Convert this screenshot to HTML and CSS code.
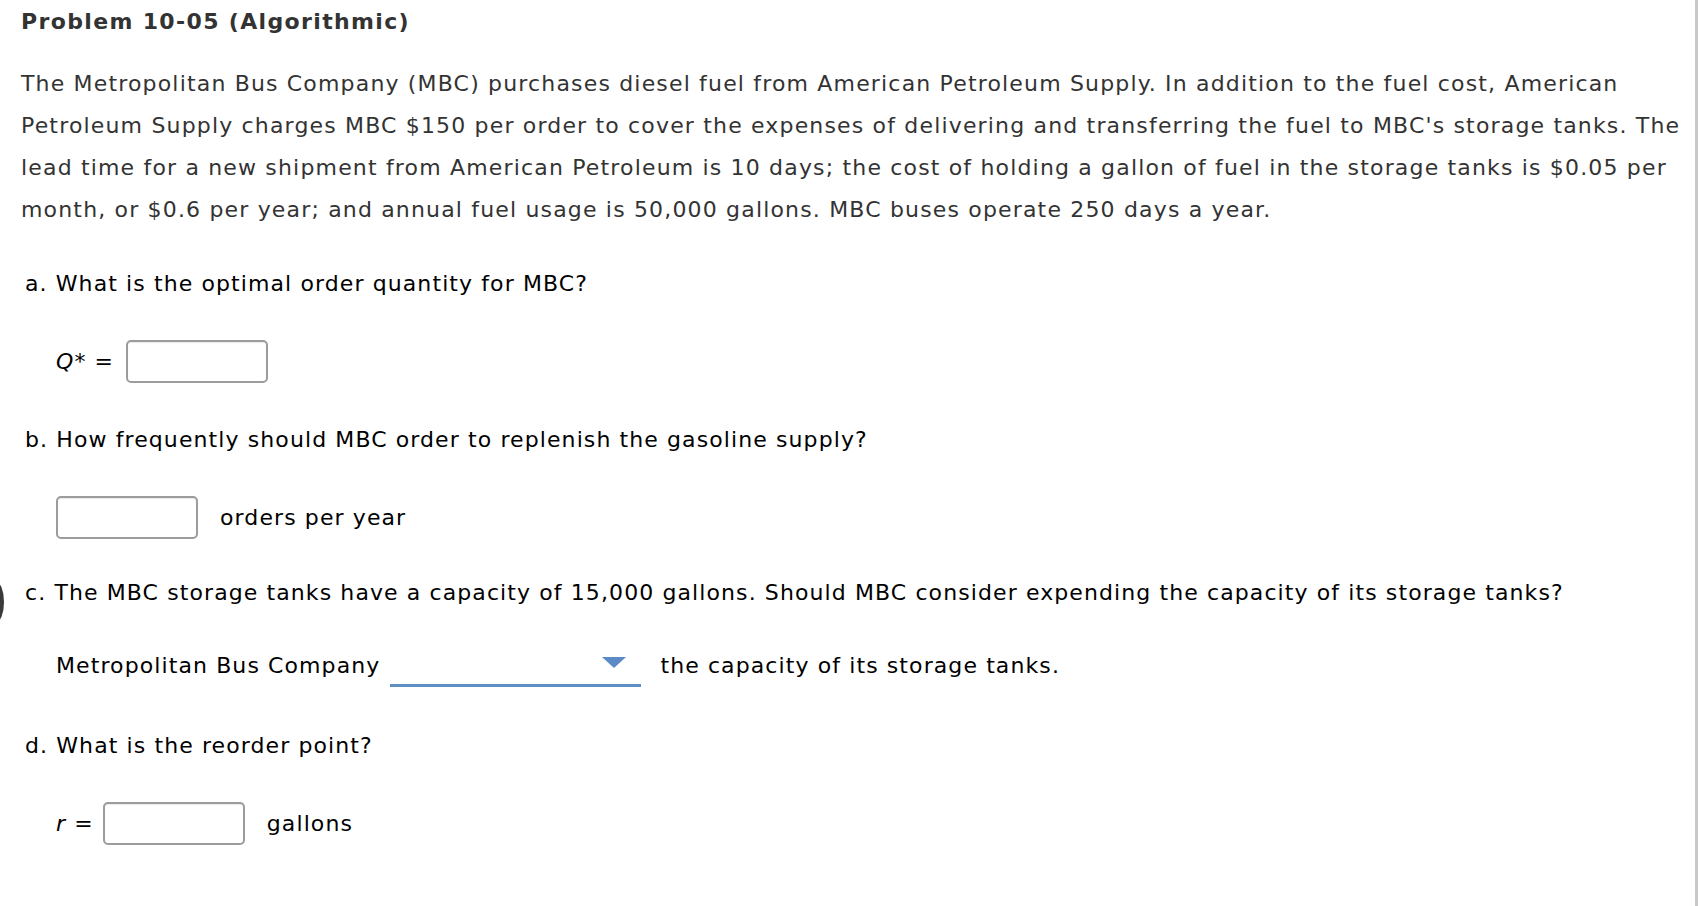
FILE: index.html
```html
<!DOCTYPE html>
<html>
<head>
<meta charset="utf-8">
<link rel="stylesheet" href="styles.css">
</head>
<body>
<div class="page">
  <h1 class="title">Problem 10-05 (Algorithmic)</h1>
  <p class="intro">The Metropolitan Bus Company (MBC) purchases diesel fuel from American Petroleum Supply. In addition to the fuel cost, American Petroleum Supply charges MBC $150 per order to cover the expenses of delivering and transferring the fuel to MBC's storage tanks. The lead time for a new shipment from American Petroleum is 10 days; the cost of holding a gallon of fuel in the storage tanks is $0.05 per month, or $0.6 per year; and annual fuel usage is 50,000 gallons. MBC buses operate 250 days a year.</p>

  <p class="question q-a">a. What is the optimal order quantity for MBC?</p>
  <div class="answer ans-a">
    <span class="label"><i>Q</i>* =</span>
    <span class="input"></span>
  </div>

  <p class="question q-b">b. How frequently should MBC order to replenish the gasoline supply?</p>
  <div class="answer ans-b">
    <span class="input"></span>
    <span class="unit">orders per year</span>
  </div>

  <p class="question q-c">c. The MBC storage tanks have a capacity of 15,000 gallons. Should MBC consider expending the capacity of its storage tanks?</p>
  <div class="answer ans-c">
    <span class="plain">Metropolitan Bus Company</span>
    <span class="select"><span class="arrow"></span></span>
    <span class="plain">the capacity of its storage tanks.</span>
  </div>

  <p class="question q-d">d. What is the reorder point?</p>
  <div class="answer ans-d">
    <span class="label"><i>r</i> =</span>
    <span class="input"></span>
    <span class="unit">gallons</span>
  </div>

  <span class="edge-dot"></span>
</div>
</body>
</html>
```

FILE: styles.css
```css
html, body {
  margin: 0;
  padding: 0;
  background: #ffffff;
}

body {
  font-family: "DejaVu Sans", Verdana, sans-serif;
  font-size: 22px;
  letter-spacing: 1.1px;
  color: #333333;
}

.page {
  position: relative;
  box-sizing: border-box;
  width: 1698px;
  height: 906px;
  padding: 1px 0 0 21px;
  border-right: 3px solid #c8c8c8;
  overflow: hidden;
}

.title {
  margin: 0;
  font-size: 22px;
  font-weight: bold;
  line-height: 42px;
  letter-spacing: 1.35px;
  color: #333333;
}

.intro {
  margin: 20px 0 0 0;
  line-height: 42px;
  letter-spacing: 1.17px;
  color: #333333;
  max-width: 1670px;
}

.question {
  margin: 0 0 0 4px;
  line-height: 42px;
  color: #000000;
}

.q-a { margin-top: 32px; }
.q-b { margin-top: 37px; }
.q-c { margin-top: 34px; }
.q-d { margin-top: 39px; }

.answer {
  display: flex;
  align-items: center;
  height: 42px;
  margin-top: 35px;
  padding-left: 35px;
  color: #000000;
}

.ans-c { margin-top: 30px; }

.label {
  margin-right: 12px;
}

.ans-d .label {
  margin-right: 9px;
}

.input {
  box-sizing: border-box;
  width: 142px;
  height: 43px;
  border: 2px solid #9c9c9c;
  border-radius: 5px;
  background: #ffffff;
  box-shadow: inset 0 1px 1px rgba(0, 0, 0, 0.08);
}

.unit {
  margin-left: 22px;
}

.select {
  position: relative;
  box-sizing: border-box;
  width: 251px;
  height: 43px;
  margin: 0 19px 0 10px;
  border-bottom: 3px solid #5f8fc2;
  align-self: flex-start;
}

.arrow {
  position: absolute;
  right: 15px;
  top: 13px;
  width: 0;
  height: 0;
  border-left: 12px solid transparent;
  border-right: 12px solid transparent;
  border-top: 11px solid #5b8ac4;
}

.edge-dot {
  position: absolute;
  left: -12px;
  top: 582px;
  width: 16px;
  height: 40px;
  border-radius: 50%;
  background: #3a3a3a;
}
```
